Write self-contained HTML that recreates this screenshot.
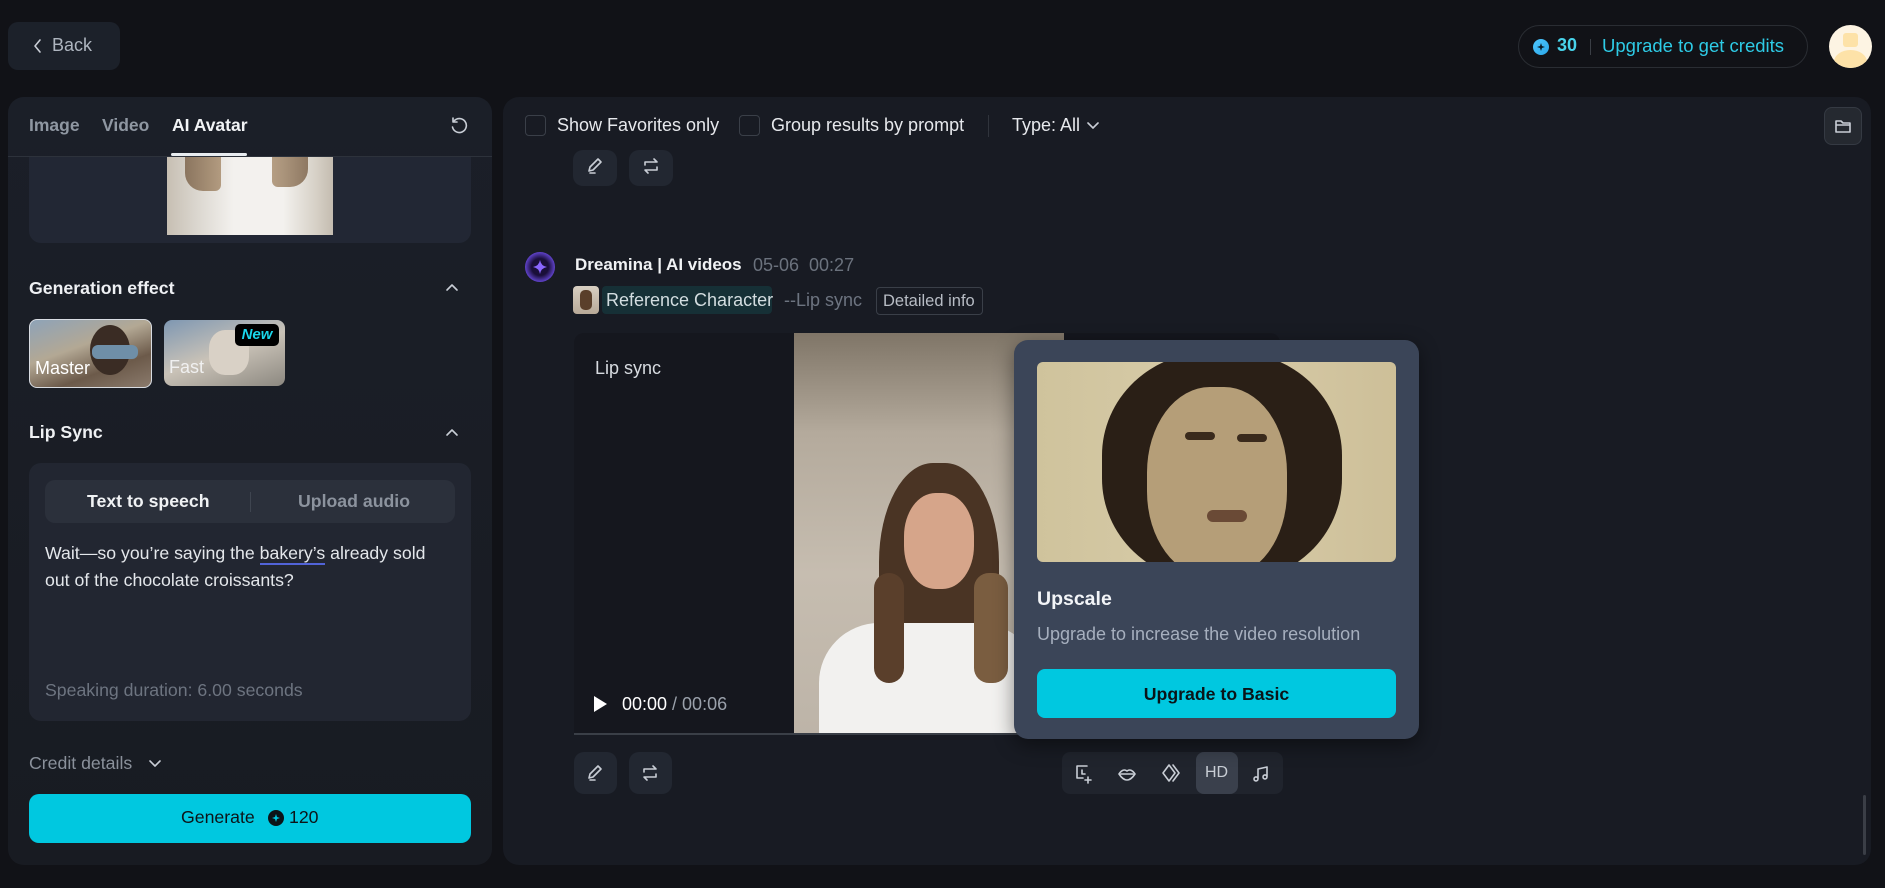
<!DOCTYPE html>
<html><head><meta charset="utf-8"><style>
*{box-sizing:border-box;margin:0;padding:0}
body{width:1885px;height:888px;background:#111217;font-family:"Liberation Sans",sans-serif;color:#e8eaee;position:relative;overflow:hidden}
.a{position:absolute}
.btn{background:#222731;border-radius:10px}
.ic{stroke:#c9ced6;fill:none;stroke-width:1.6;stroke-linecap:round;stroke-linejoin:round}
</style></head><body>
<!-- back -->
<div class="a" style="left:8px;top:22px;width:112px;height:48px;background:#1c212a;border-radius:10px"></div>
<svg class="a" style="left:32px;top:38px" width="12" height="16"><path d="M8 2L3 8l5 6" class="ic" stroke-width="2"/></svg>
<div class="a" style="left:52px;top:35px;font-size:18px;color:#aeb5bf">Back</div>
<!-- credits pill -->
<div class="a" style="left:1518px;top:25px;width:290px;height:43px;border:1px solid #2a2d33;border-radius:22px"></div>
<div class="a" style="left:1533px;top:39px;width:16px;height:16px;border-radius:50%;background:linear-gradient(135deg,#4fc8ff,#2aa6e8)"></div>
<svg class="a" style="left:1536px;top:42px" width="10" height="10"><path d="M5 1L6 4 9 5 6 6 5 9 4 6 1 5 4 4Z" fill="#0b1a24"/></svg>
<div class="a" style="left:1557px;top:35px;font-size:18px;color:#48d3ea;font-weight:bold">30</div>
<div class="a" style="left:1590px;top:39px;width:1px;height:16px;background:#3a3e45"></div>
<div class="a" style="left:1602px;top:35px;font-size:18.5px;color:#2ecbe6">Upgrade to get credits</div>
<div class="a" style="left:1829px;top:25px;width:43px;height:43px;border-radius:50%;background:#fdf4e3;overflow:hidden"><div class="a" style="left:14px;top:8px;width:15px;height:14px;background:#fde2a8;border-radius:3px"></div><div class="a" style="left:5px;top:25px;width:33px;height:24px;background:#fde2a8;border-radius:50%"></div></div>

<!-- left panel -->
<div class="a" style="left:8px;top:97px;width:484px;height:768px;background:linear-gradient(180deg,#1b1f28,#181b22);border-radius:16px"></div>
<div class="a" style="left:29px;top:115px;font-size:17.5px;color:#8f97a2;font-weight:bold">Image</div>
<div class="a" style="left:102px;top:115px;font-size:17.5px;color:#8f97a2;font-weight:bold">Video</div>
<div class="a" style="left:172px;top:115px;font-size:17.5px;color:#f2f4f6;font-weight:bold">AI Avatar</div>
<div class="a" style="left:171px;top:153px;width:76px;height:3px;background:#e8ecf0;border-radius:2px"></div>
<div class="a" style="left:8px;top:156px;width:484px;height:1px;background:#2d323b"></div>
<svg class="a" style="left:449px;top:116px" width="20" height="20"><path d="M5 5A7 7 0 1 1 3.5 11" class="ic" stroke-width="1.8"/><path d="M4 2v4h4" class="ic" stroke-width="1.8"/></svg>
<div class="a" style="left:29px;top:157px;width:442px;height:86px;background:#222734;border-radius:0 0 12px 12px"></div>
<div class="a" style="left:167px;top:157px;width:166px;height:78px;background:linear-gradient(90deg,#c7bfb3 0,#ddd9d2 20%,#f3f1ee 40%,#f3f1ee 70%,#d6d0c6 90%,#c4bcb0)"></div>
<div class="a" style="left:185px;top:157px;width:36px;height:34px;background:linear-gradient(90deg,#6c4f33,#9a7a55);border-radius:0 0 6px 18px;opacity:.7"></div>
<div class="a" style="left:272px;top:157px;width:36px;height:30px;background:linear-gradient(90deg,#9a7a55,#6c4f33);border-radius:0 0 18px 6px;opacity:.7"></div>

<div class="a" style="left:29px;top:278px;font-size:17.7px;font-weight:bold;color:#eef0f3">Generation effect</div>
<svg class="a" style="left:445px;top:283px" width="14" height="10"><path d="M2 7l5-5 5 5" class="ic"/></svg>
<div class="a" style="left:29px;top:319px;width:123px;height:69px;border-radius:8px;border:1.5px solid #d8dce2;background:linear-gradient(160deg,#8ea3b8 0,#b3a894 40%,#6c5a4a 70%,#8a7a6c);overflow:hidden"><div class="a" style="left:60px;top:5px;width:40px;height:50px;border-radius:50%;background:#3a2c24"></div><div class="a" style="left:62px;top:25px;width:46px;height:14px;border-radius:6px;background:#6f8fa8"></div><div class="a" style="left:5px;top:38px;font-size:18px;color:#fff">Master</div></div>
<div class="a" style="left:164px;top:320px;width:121px;height:66px;border-radius:8px;background:linear-gradient(160deg,#7e97b2,#c9c2b7 50%,#8c8880);overflow:hidden"><div class="a" style="left:45px;top:10px;width:40px;height:45px;border-radius:40%;background:#d9d1c6"></div><div class="a" style="left:5px;top:37px;font-size:18px;color:#f0f0f0">Fast</div><div class="a" style="left:71px;top:4px;width:44px;height:22px;background:#000;border-radius:5px;color:#1ad6ea;font-size:15px;font-style:italic;font-weight:bold;text-align:center;line-height:22px">New</div></div>

<div class="a" style="left:29px;top:422px;font-size:17.7px;font-weight:bold;color:#eef0f3">Lip Sync</div>
<svg class="a" style="left:445px;top:428px" width="14" height="10"><path d="M2 7l5-5 5 5" class="ic"/></svg>
<div class="a" style="left:29px;top:463px;width:442px;height:258px;background:#222631;border-radius:12px"></div>
<div class="a" style="left:45px;top:480px;width:410px;height:43px;background:#2b303b;border-radius:10px"></div>
<div class="a" style="left:87px;top:491px;font-size:17.7px;font-weight:bold;color:#f0f2f4">Text to speech</div>
<div class="a" style="left:250px;top:492px;width:1px;height:20px;background:#3f4550"></div>
<div class="a" style="left:298px;top:491px;font-size:17.7px;font-weight:bold;color:#8c939e">Upload audio</div>
<div class="a" style="left:45px;top:540px;font-size:17.7px;line-height:27px;color:#e4e7eb;width:400px">Wait—so you’re saying the <span style="border-bottom:2px solid #5163d8">bakery’s</span> already sold out of the chocolate croissants?</div>
<div class="a" style="left:45px;top:680px;font-size:17.7px;color:#6d7480">Speaking duration: 6.00 seconds</div>
<div class="a" style="left:29px;top:753px;font-size:17.7px;color:#8a919b">Credit details</div>
<svg class="a" style="left:148px;top:759px" width="14" height="10"><path d="M2 2l5 5 5-5" class="ic" stroke="#8a919b"/></svg>
<div class="a" style="left:29px;top:794px;width:442px;height:49px;background:#00c8e0;border-radius:10px"></div>
<div class="a" style="left:181px;top:807px;font-size:17.7px;color:#0c1418">Generate</div>
<div class="a" style="left:268px;top:810px;width:16px;height:16px;border-radius:50%;background:#0c1418"></div>
<svg class="a" style="left:271px;top:813px" width="10" height="10"><path d="M5 1L6 4 9 5 6 6 5 9 4 6 1 5 4 4Z" fill="#00c8e0"/></svg>
<div class="a" style="left:289px;top:807px;font-size:17.7px;color:#0c1418">120</div>

<!-- right panel -->
<div class="a" style="left:503px;top:97px;width:1368px;height:768px;background:#181b23;border-radius:16px"></div>
<div class="a" style="left:525px;top:115px;width:21px;height:21px;border:1px solid #3a3f48;border-radius:4px"></div>
<div class="a" style="left:557px;top:115px;font-size:18px;color:#e6e8ec">Show Favorites only</div>
<div class="a" style="left:739px;top:115px;width:21px;height:21px;border:1px solid #3a3f48;border-radius:4px"></div>
<div class="a" style="left:771px;top:115px;font-size:18px;color:#e6e8ec">Group results by prompt</div>
<div class="a" style="left:988px;top:115px;width:1px;height:22px;background:#30343c"></div>
<div class="a" style="left:1012px;top:115px;font-size:18px;color:#e6e8ec">Type: All</div>
<svg class="a" style="left:1087px;top:122px" width="12" height="8"><path d="M1 1l5 5 5-5" class="ic"/></svg>
<div class="a" style="left:1824px;top:107px;width:38px;height:38px;background:#252930;border:1px solid #353a43;border-radius:8px"></div>
<svg class="a" style="left:1834px;top:118px" width="18" height="16"><path d="M2 3h5l2 2h7v9H2z M2 7h14" class="ic" stroke="#e8eaee"/></svg>

<div class="a btn" style="left:573px;top:150px;width:44px;height:36px"></div>
<div class="a btn" style="left:629px;top:150px;width:44px;height:36px"></div>
<svg class="a" style="left:585px;top:156px" width="20" height="20"><path d="M4 15l1-4 8-8 3 3-8 8z M5 17h5" class="ic"/></svg>
<svg class="a" style="left:641px;top:156px" width="20" height="20"><path d="M4 9V6h12l-3-3 M16 11v3H4l3 3" class="ic"/></svg>

<div class="a" style="left:525px;top:252px;width:30px;height:30px;border-radius:50%;background:radial-gradient(circle,#1a0f3a 40%,#6a4ae0 75%)"></div>
<svg class="a" style="left:532px;top:259px" width="16" height="16"><path d="M8 1Q9 7 15 8Q9 9 8 15Q7 9 1 8Q7 7 8 1Z" fill="#8a66ff"/></svg>
<div class="a" style="left:575px;top:255px;font-size:17px;font-weight:bold;color:#f0f2f4">Dreamina | AI videos</div>
<div class="a" style="left:753px;top:255px;font-size:18px;color:#6b727d">05-06&nbsp;&nbsp;00:27</div>
<div class="a" style="left:573px;top:286px;width:26px;height:28px;border-radius:4px;background:linear-gradient(#d8cfc2,#b8aa98)"><div class="a" style="left:7px;top:4px;width:12px;height:20px;border-radius:5px;background:#5a3f2a"></div></div>
<div class="a" style="left:602px;top:286px;width:170px;height:28px;background:#163036;border-radius:4px"></div>
<div class="a" style="left:606px;top:290px;font-size:18px;color:#d3dde0">Reference Character</div>
<div class="a" style="left:784px;top:290px;font-size:18px;color:#6d7480">--Lip sync</div>
<div class="a" style="left:876px;top:287px;width:107px;height:28px;border:1px solid #3a3f48;border-radius:4px"></div>
<div class="a" style="left:883px;top:292px;font-size:16.5px;color:#b7bcc4">Detailed info</div>

<!-- video -->
<div class="a" style="left:574px;top:333px;width:706px;height:402px;background:#15171e;border-radius:10px 10px 0 0;overflow:hidden">
 <div class="a" style="left:220px;top:0;width:270px;height:400px;background:linear-gradient(180deg,#7f7567 0,#b4aa9c 25%,#c6bdb0 60%,#bdb4a8)"></div>
 <div class="a" style="left:305px;top:130px;width:120px;height:220px;border-radius:45% 45% 30% 30%;background:#4a3424"></div>
 <div class="a" style="left:330px;top:160px;width:70px;height:96px;border-radius:45%;background:#d6a58a"></div>
 <div class="a" style="left:245px;top:290px;width:220px;height:120px;border-radius:60px 60px 0 0;background:#f2f1ef"></div>
 <div class="a" style="left:300px;top:240px;width:30px;height:110px;border-radius:15px;background:#5a3f2b"></div>
 <div class="a" style="left:400px;top:240px;width:34px;height:110px;border-radius:15px;background:#7a5d40"></div>
 <div class="a" style="left:0;top:400px;width:706px;height:3px;background:#3a3f47"></div>
</div>
<div class="a" style="left:595px;top:358px;font-size:18px;color:#d7dbe0">Lip sync</div>
<svg class="a" style="left:592px;top:695px" width="16" height="18"><path d="M2 1l13 8-13 8z" fill="#fff"/></svg>
<div class="a" style="left:622px;top:694px;font-size:18px;color:#fff">00:00 <span style="color:#9aa1ab">/ 00:06</span></div>

<div class="a btn" style="left:574px;top:752px;width:43px;height:42px"></div>
<div class="a btn" style="left:629px;top:752px;width:43px;height:42px"></div>
<svg class="a" style="left:585px;top:763px" width="20" height="20"><path d="M4 15l1-4 8-8 3 3-8 8z M5 17h5" class="ic"/></svg>
<svg class="a" style="left:640px;top:763px" width="20" height="20"><path d="M4 9V6h12l-3-3 M16 11v3H4l3 3" class="ic"/></svg>

<div class="a" style="left:1062px;top:752px;width:221px;height:42px;background:#20242d;border-radius:8px"></div>
<div class="a" style="left:1196px;top:752px;width:42px;height:42px;background:#3a404c;border-radius:8px"></div>
<svg class="a" style="left:1073px;top:763px" width="22" height="22"><path d="M14 3H4v12h6 M9 7v4h3 M15 14v6 M12 17h6" class="ic" stroke="#5d636d"/></svg>
<svg class="a" style="left:1116px;top:763px" width="22" height="22"><path d="M3 11Q7 5 11 8Q15 5 19 11Q15 17 11 17Q7 17 3 11Z M5 11h12" class="ic" stroke="#aab0b9"/></svg>
<svg class="a" style="left:1160px;top:762px" width="22" height="22"><path d="M9 3L3 11l6 8 6-8z M13 3l6 8-6 8" class="ic" stroke="#aab0b9"/></svg>
<div class="a" style="left:1205px;top:764px;font-size:16px;color:#c8cdd4">HD</div>
<svg class="a" style="left:1250px;top:763px" width="22" height="22"><path d="M8 16V6l9-2v10 M8 16a2 2 0 1 1 0-.1 M17 14a2 2 0 1 1 0-.1" class="ic" stroke="#4d535c"/></svg>

<!-- popup -->
<div class="a" style="left:1014px;top:340px;width:405px;height:399px;background:#3b4558;border-radius:14px;box-shadow:0 6px 20px rgba(0,0,0,.45)"></div>
<div class="a" style="left:1037px;top:362px;width:359px;height:200px;border-radius:6px;background:linear-gradient(90deg,#cfc39c,#d8ccaa 50%,#cdbf98);overflow:hidden">
 <div class="a" style="left:65px;top:-10px;width:240px;height:230px;border-radius:45%;background:#2a1f16"></div>
 <div class="a" style="left:110px;top:25px;width:140px;height:190px;border-radius:45%;background:#b59e78"></div>
 <div class="a" style="left:148px;top:70px;width:30px;height:8px;border-radius:4px;background:#3a2a1c"></div>
 <div class="a" style="left:200px;top:72px;width:30px;height:8px;border-radius:4px;background:#3a2a1c"></div>
 <div class="a" style="left:170px;top:148px;width:40px;height:12px;border-radius:6px;background:#6a4a36"></div>
</div>
<div class="a" style="left:1037px;top:588px;font-size:19.5px;font-weight:bold;color:#f2f4f7">Upscale</div>
<div class="a" style="left:1037px;top:624px;font-size:18px;color:#a6afbe">Upgrade to increase the video resolution</div>
<div class="a" style="left:1037px;top:669px;width:359px;height:49px;background:#00c8e0;border-radius:8px"></div>
<div class="a" style="left:1037px;top:684px;width:359px;text-align:center;font-size:17.7px;font-weight:bold;color:#0a1418">Upgrade to Basic</div>

<div class="a" style="left:1863px;top:795px;width:3px;height:60px;background:#3a3e46;border-radius:2px"></div>
</body></html>
